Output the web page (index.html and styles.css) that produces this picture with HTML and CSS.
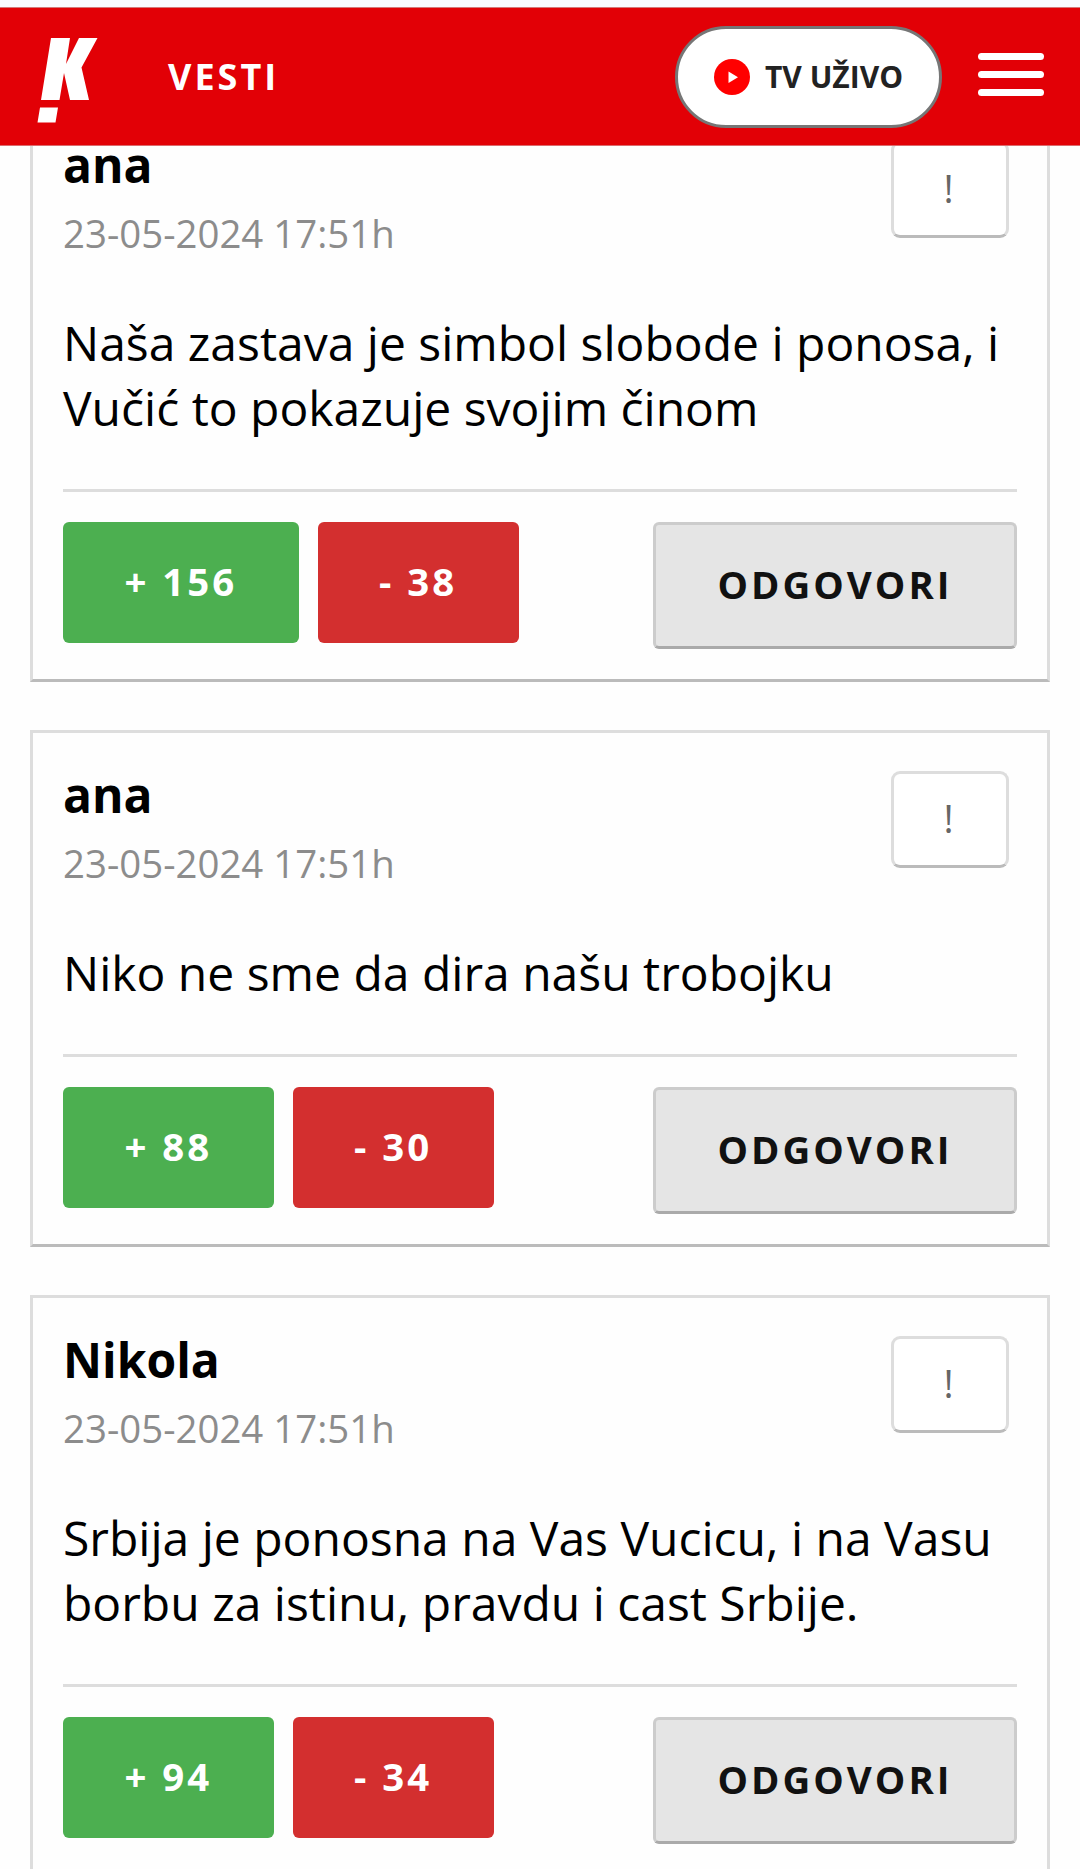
FILE: index.html
```html
<!DOCTYPE html>
<html lang="sr-Latn">
<head>
    <meta charset="UTF-8">
    <meta name="viewport" content="width=device-width, initial-scale=1.0">
    <title>Vesti - Komentari</title>
    <link rel="stylesheet" href="styles.css">
</head>
<body>

<header class="header">
    <a href="#" class="logo" aria-label="Kurir">
        <svg width="62" height="86" viewBox="0 0 62 86">
            <path fill="#fff" d="M14 0H33L29 26L42 0H60.5L44.5 29.5L52 62H33L27 35L22.5 62H4zM3 69.500H21L18.500 84.500H.5z"/>
        </svg>
    </a>
    <a href="#" class="section">VESTI</a>
    <a href="#" class="tv-button">
        <svg class="play" width="36" height="36" viewBox="0 0 36 36">
            <circle cx="18" cy="18" r="18" fill="#f00"/>
            <path d="M14.500 12.500V24L24 18.200z" fill="#fff"/>
        </svg>
        <span>TV UŽIVO</span>
    </a>
    <button class="menu" aria-label="Meni">
        <span></span>
        <span></span>
        <span></span>
    </button>
</header>

<main class="comments">
    <article class="comment">
        <div class="comment-head">
            <div>
                <h3>ana</h3>
                <time>23-05-2024 17:51h</time>
            </div>
            <button class="report">!</button>
        </div>
        <p>Naša zastava je simbol slobode i ponosa, i Vučić to pokazuje svojim činom</p>
        <div class="comment-actions">
            <button class="vote plus">+ 156</button>
            <button class="vote minus">- 38</button>
            <button class="reply">ODGOVORI</button>
        </div>
    </article>

    <article class="comment">
        <div class="comment-head">
            <div>
                <h3>ana</h3>
                <time>23-05-2024 17:51h</time>
            </div>
            <button class="report">!</button>
        </div>
        <p>Niko ne sme da dira našu trobojku</p>
        <div class="comment-actions">
            <button class="vote plus">+ 88</button>
            <button class="vote minus">- 30</button>
            <button class="reply">ODGOVORI</button>
        </div>
    </article>

    <article class="comment">
        <div class="comment-head">
            <div>
                <h3>Nikola</h3>
                <time>23-05-2024 17:51h</time>
            </div>
            <button class="report">!</button>
        </div>
        <p>Srbija je ponosna na Vas Vucicu, i na Vasu borbu za istinu, pravdu i cast Srbije.</p>
        <div class="comment-actions">
            <button class="vote plus">+ 94</button>
            <button class="vote minus">- 34</button>
            <button class="reply">ODGOVORI</button>
        </div>
    </article>
</main>

</body>
</html>
```

FILE: styles.css
```css
* {
    box-sizing: border-box;
}

body {
    margin: 0;
    height: 1869px;
    overflow: hidden;
    background: #fefefe;
    font-family: "Open Sans", "Noto Sans", sans-serif;
    color: #000;
}

button {
    font-family: inherit;
    margin: 0;
}

.header {
    position: relative;
    z-index: 2;
    display: flex;
    align-items: center;
    height: 146px;
    padding: 2px 36px 0 37px;
    border-top: 7px solid #faf9ff;
    border-bottom: 1px solid #dc6a6d;
    background: #e20006;
    box-shadow: inset 0 1px 0 #d4777a;
}

.logo {
    width: 62px;
    height: 86px;
    margin-top: 7px;
}

.logo svg {
    display: block;
}

.section {
    margin: -2px 0 0 69px;
    color: #fff;
    font-size: 36px;
    font-weight: 700;
    letter-spacing: 3px;
    text-decoration: none;
}

.tv-button {
    display: flex;
    align-items: center;
    gap: 15px;
    width: 267px;
    height: 102px;
    margin-left: auto;
    padding-left: 36px;
    border: 3px solid #767676;
    border-radius: 51px;
    background: #fff;
    color: #222;
    font-size: 30px;
    font-weight: 700;
    text-decoration: none;
    white-space: nowrap;
}

.tv-button span {
    margin-top: -1px;
}

.menu {
    display: flex;
    flex-direction: column;
    gap: 11px;
    width: 66px;
    margin: -6px 0 0 36px;
    padding: 0;
    border: 0;
    background: none;
}

.menu span {
    height: 7px;
    border-radius: 4px;
    background: #fff;
}

.comments {
    margin-top: -46px;
    padding: 0 30px;
}

.comment {
    margin-bottom: 48px;
    padding: 30px;
    border: 3px solid #ddd;
    border-bottom-color: #bbb;
}

.comment-head {
    display: flex;
    justify-content: space-between;
    height: 177px;
}

.comment h3 {
    margin: -1px 0 0;
    font-size: 48px;
    font-weight: 700;
    line-height: 65px;
}

.comment time {
    display: block;
    margin-top: 10px;
    color: #8c8c8c;
    font-size: 38.4px;
    line-height: 52px;
}

.report {
    width: 118px;
    height: 97px;
    margin: 8px 8px 0 0;
    padding: 0 3px 3px 0;
    border: 3px solid #ddd;
    border-bottom-color: #bbb;
    border-radius: 9px;
    background: #fff;
    color: #666;
    font-size: 38.4px;
}

.comment p {
    margin: 0 0 49px;
    font-size: 48px;
    line-height: 65px;
}

.comment-actions {
    display: flex;
    align-items: flex-start;
    padding-top: 30px;
    border-top: 3px solid #ddd;
}

.vote,
.reply {
    padding: 0 61.4px 3px;
    border: 0;
    border-radius: 6px;
    font-size: 38.4px;
    font-weight: 700;
    letter-spacing: 3px;
    white-space: nowrap;
}

.vote {
    height: 121px;
    margin-right: 19px;
    color: #fff;
}

.plus {
    background: #4caf50;
}

.minus {
    background: #d32f2f;
}

.reply {
    width: 364px;
    height: 127px;
    margin-left: auto;
    border: 3px solid #ccc;
    border-bottom-color: #aaa;
    background: #e5e5e5;
    color: #111;
}
```
